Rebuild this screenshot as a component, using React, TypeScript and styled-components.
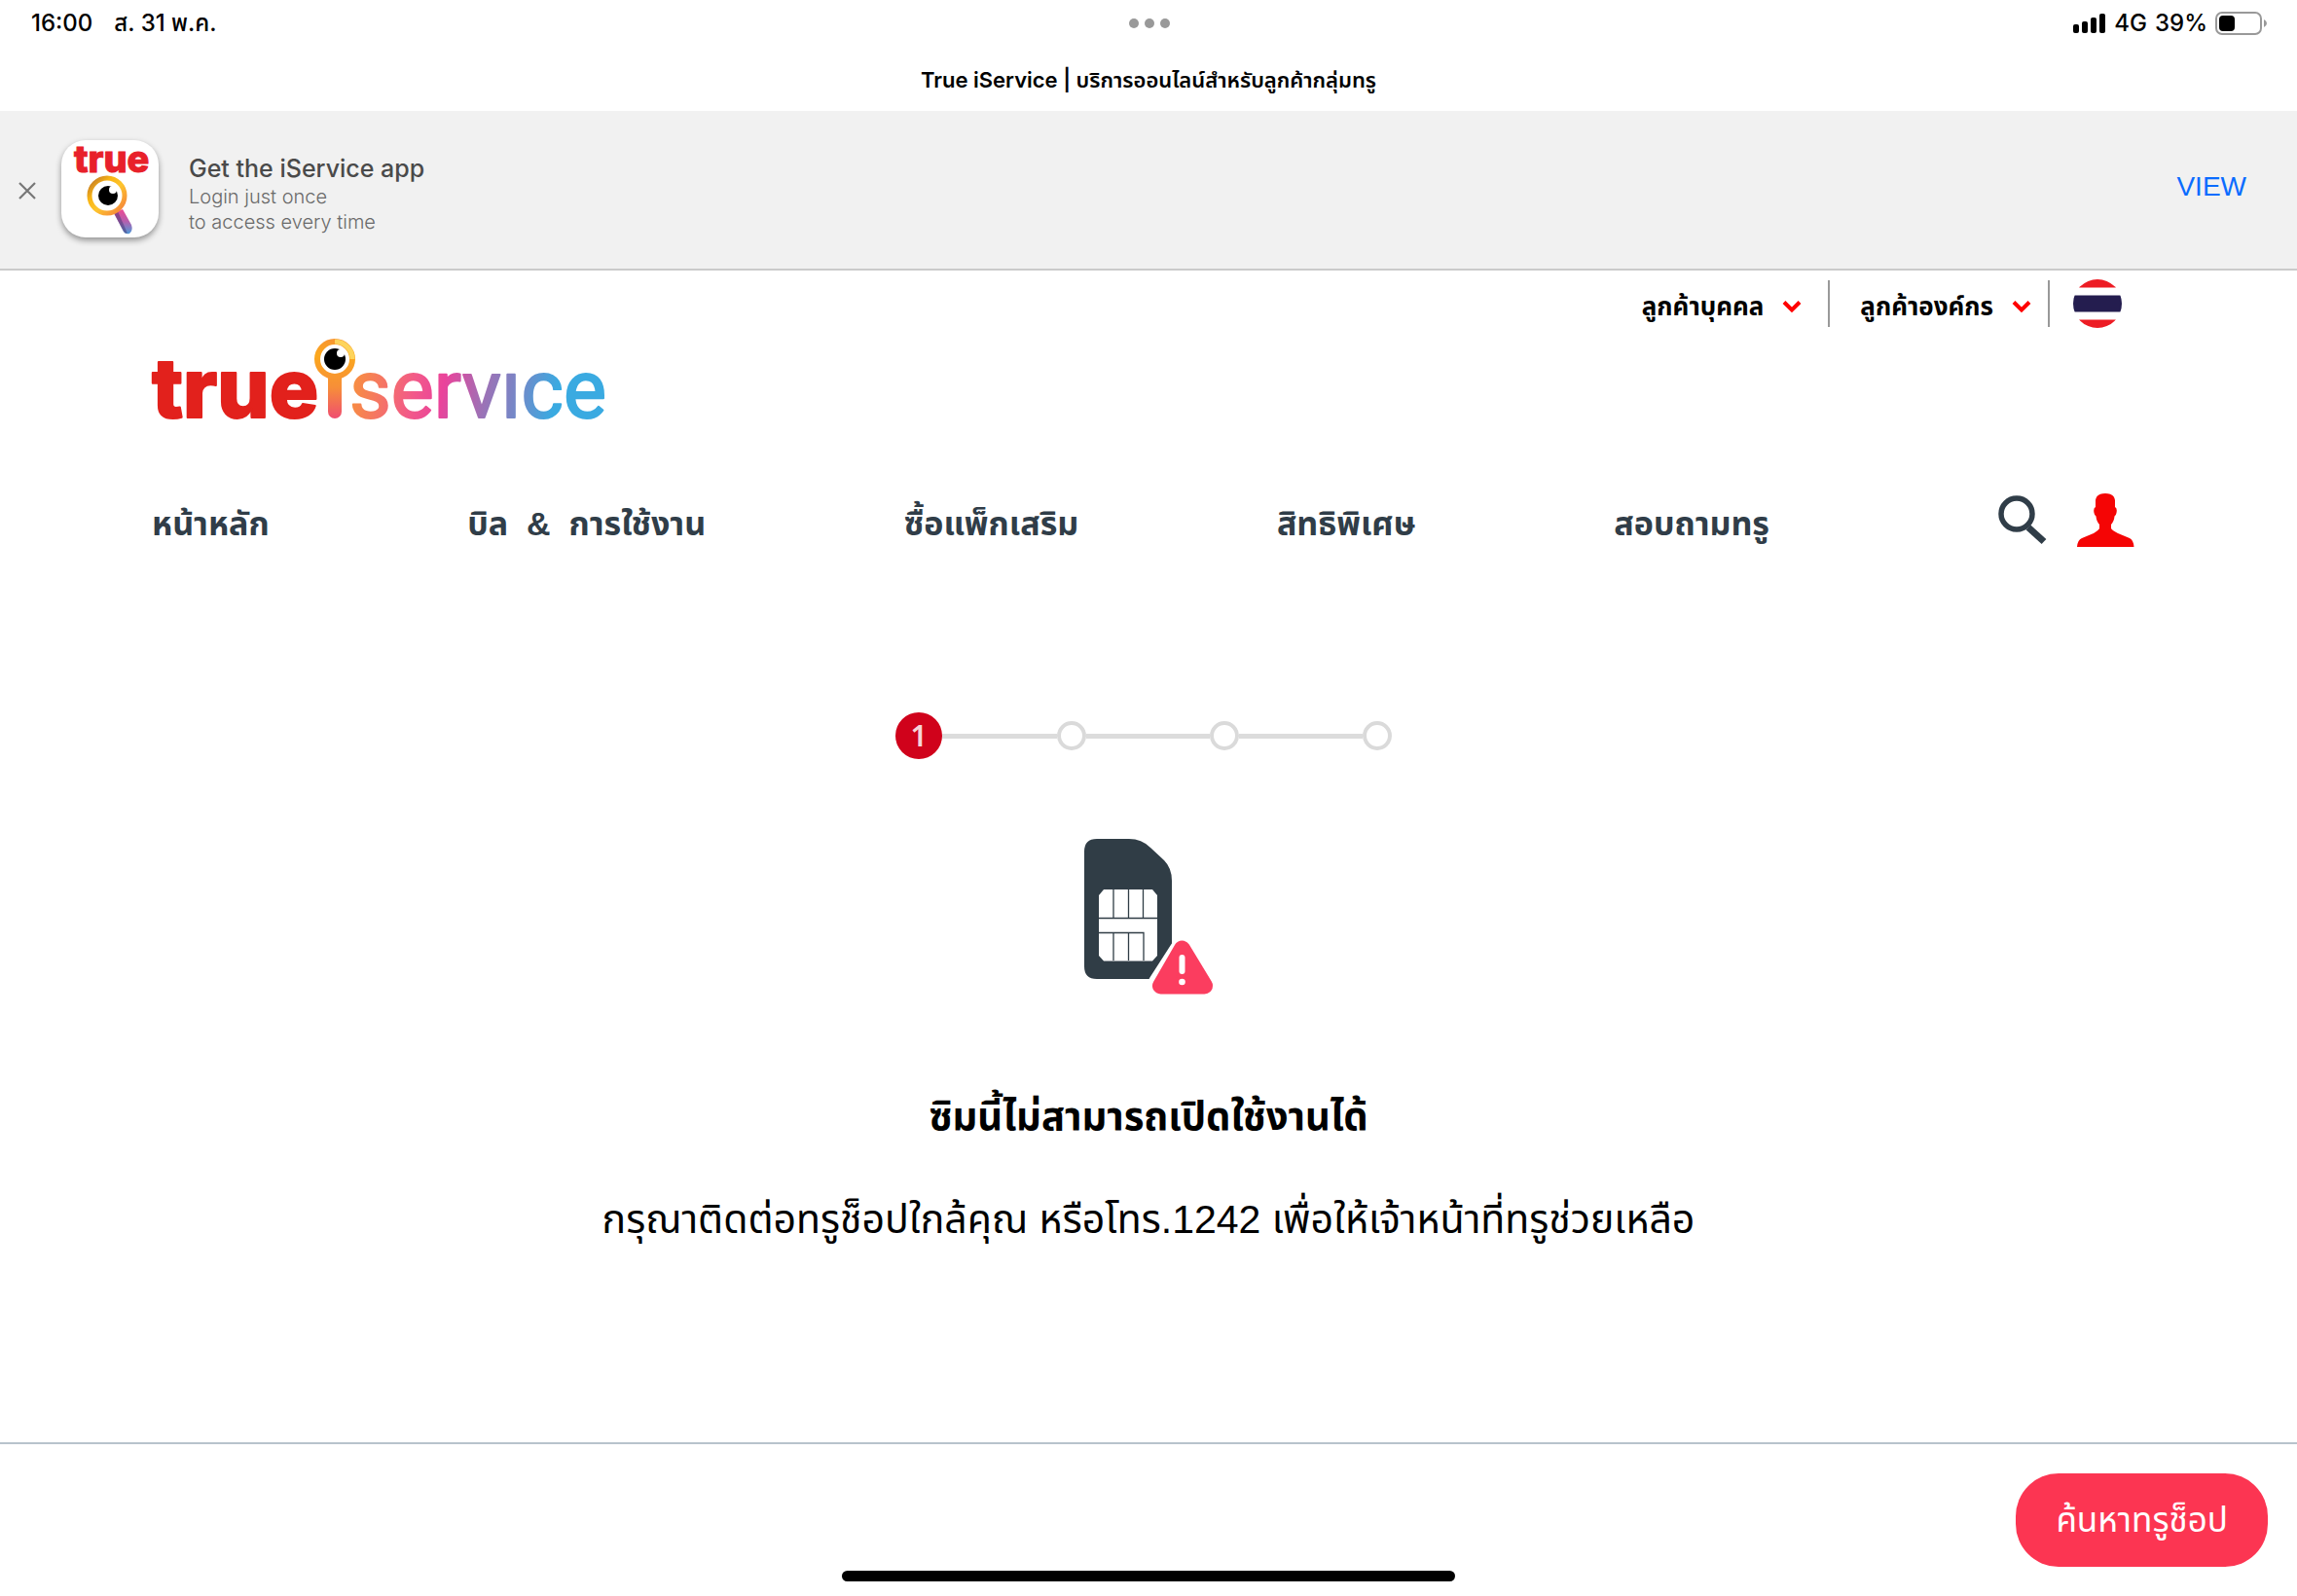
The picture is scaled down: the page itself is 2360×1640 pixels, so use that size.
import React from "react";
import styled, { createGlobalStyle } from "styled-components";

const ui = `Inter, "Noto Sans Thai", "Noto Sans", sans-serif`;
const helv = `"Liberation Sans", Arial, sans-serif`;
const thai = `"Liberation Sans", "Noto Sans Thai", sans-serif`;

const GlobalStyle = createGlobalStyle`
  *, *::before, *::after { box-sizing: border-box; }
  html, body, #root { height: 100%; }
  body { margin: 0; background: #fff; color: #000; font-family: ${thai}; }
  h1, h2, p, ol { margin: 0; padding: 0; }
  button { border: 0; padding: 0; background: none; color: inherit; font-family: inherit; cursor: pointer; }
  a { color: inherit; text-decoration: none; }
  svg { display: block; overflow: visible; }
`;

const Screen = styled.div`
  min-height: 100vh;
  display: flex;
  flex-direction: column;
`;

const StatusBar = styled.div`
  display: grid;
  grid-template-columns: 1fr auto 1fr;
  align-items: center;
  height: 48px;
  padding: 0 30px 0 32px;
  font: 500 24px/32px ${ui};
`;

const StatusLeft = styled.div`
  display: flex;
  gap: 22px;
`;

const StatusRight = styled.div`
  display: flex;
  align-items: center;
  justify-content: flex-end;
  gap: 8px;
`;

const Dots = styled.div`
  display: flex;
  gap: 6px;
`;

const Dot = styled.span`
  width: 10px;
  height: 10px;
  border-radius: 50%;
  background: #999;
`;

const TabTitle = styled.div`
  height: 66px;
  padding-top: 18px;
  text-align: center;
  font: 600 22px/32px ${ui};
`;

const AppBanner = styled.aside`
  display: flex;
  align-items: center;
  height: 164px;
  padding: 0 52px 0 20px;
  background: #f1f1f1;
  border-bottom: 2px solid #cbcbcb;
`;

const CloseButton = styled.button`
  padding-top: 2px;
`;

const AppIcon = styled.div`
  width: 100px;
  height: 100px;
  margin: 0 31px 2px 27px;
  border-radius: 25px;
  background: #fff;
  box-shadow: 0 3px 6px rgba(0, 0, 0, 0.4);
`;

const BannerText = styled.div`
  flex: 1;
  padding-top: 8px;
  font: 300 20px/26px ${ui};
  color: #6a6a6a;
`;

const BannerTitle = styled.div`
  font: 500 25px/32px ${ui};
  color: #4a4a4a;
`;

const ViewLink = styled.a`
  && { color: #0a6cff; }
  padding-bottom: 6px;
  font: 400 28px/32px ${helv};
`;

const Header = styled.header`
  padding: 8px 156px 0;
`;

const TopLinks = styled.div`
  display: flex;
  justify-content: flex-end;
  align-items: center;
  height: 52px;
  padding-right: 24px;
`;

const TopItem = styled.button`
  display: flex;
  align-items: center;
  gap: 19px;
  height: 48px;
  padding: 6px 17px 0 31px;
  border-right: 2px solid #999;
  font-size: 26px;
  line-height: 40px;
  font-weight: 700;
  &:first-child { padding-right: 27px; }
`;

const FlagButton = styled.button`
  margin-left: 24px;
`;

const Brand = styled.a`
  display: block;
  width: 468px;
  margin-top: 10px;
`;

const MainNav = styled.nav`
  display: flex;
  align-items: center;
  margin-top: 64px;
  height: 72px;
`;

const NavItems = styled.div`
  flex: 1;
  display: flex;
  justify-content: space-between;
  color: #303d48;
  font-size: 34px;
  line-height: 56px;
  font-weight: 700;
`;

const NavIcons = styled.div`
  display: flex;
  align-items: center;
  gap: 31px;
  padding: 0 11px 8px 235px;
`;

const Main = styled.main`
  flex: 1;
  display: flex;
  flex-direction: column;
  align-items: center;
  padding-top: 158px;
`;

const Steps = styled.ol`
  display: flex;
  align-items: center;
  list-style: none;
  margin-right: 10px;
`;

const Step = styled.li<{ $active?: boolean }>`
  display: grid;
  place-items: center;
  width: ${(p) => (p.$active ? 48 : 30)}px;
  height: ${(p) => (p.$active ? 48 : 30)}px;
  border-radius: 50%;
  border: ${(p) => (p.$active ? "0" : "4px solid #dadada")};
  background: ${(p) => (p.$active ? "#d0021b" : "#fff")};
  color: #f6d5d9;
  font: 600 30px/32px "Noto Sans", sans-serif;
`;

const StepLine = styled.li`
  width: 127px;
  height: 5px;
  background: #dcdcdc;
  &:nth-child(2) { width: 118px; }
`;

const SimArt = styled.div`
  margin-top: 82px;
`;

const Heading = styled.h1`
  margin-top: 93px;
  font-size: 40px;
  line-height: 64px;
  font-weight: 700;
`;

const Message = styled.p`
  margin-top: 42px;
  font-size: 41px;
  line-height: 64px;
`;

const Footer = styled.footer`
  position: relative;
  height: 158px;
  display: flex;
  justify-content: flex-end;
  align-items: flex-start;
  padding: 30px 30px 0;
  border-top: 2px solid #b8c3cc;
`;

const ShopButton = styled.button`
  height: 96px;
  padding: 0 41px;
  border-radius: 44px;
  background: #fc3552;
  color: #fff;
  font-size: 35px;
  line-height: 56px;
`;

const HomeIndicator = styled.div`
  position: absolute;
  left: 50%;
  bottom: 15px;
  width: 630px;
  height: 11px;
  margin-left: -315px;
  border-radius: 6px;
  background: #000;
`;

const Chevron = () => (
  <svg width="20" height="14" viewBox="0 0 20 14" fill="none" stroke="#f00" strokeWidth="4">
    <path d="M2 2.500 L10 10.500 L18 2.500" />
  </svg>
);

const Flag = () => (
  <svg width="50" height="50" viewBox="0 0 50 50" aria-hidden="true">
    <clipPath id="flag"><circle cx="25" cy="25" r="25" /></clipPath>
    <g clipPath="url(#flag)">
      <rect width="50" height="50" fill="#fff" />
      <rect width="50" height="8.500" fill="#ed1c24" />
      <rect y="16.500" width="50" height="17" fill="#241d4f" />
      <rect y="41.500" width="50" height="9" fill="#ed1c24" />
    </g>
  </svg>
);

const Signal = () => (
  <svg width="34" height="20" viewBox="0 0 34 20">
    <rect x="0" y="11" width="6" height="9" rx="2" />
    <rect x="9" y="8" width="6" height="12" rx="2" />
    <rect x="18" y="4" width="6" height="16" rx="2" />
    <rect x="27" y="0" width="6" height="20" rx="2" />
  </svg>
);

const Battery = () => (
  <svg width="54" height="24" viewBox="0 0 54 24">
    <rect x="1" y="1" width="46" height="22" rx="6" fill="none" stroke="#999" strokeWidth="2" />
    <rect x="4" y="4" width="16" height="16" rx="4" />
    <path d="M50 8 Q53 9.500 53 12 Q53 14.500 50 16 Z" fill="#999" />
  </svg>
);

const AppIconArt = () => (
  <svg width="100" height="100" viewBox="0 0 100 100" aria-hidden="true">
    <defs>
      <linearGradient id="ring" x1="0" y1="0" x2="1" y2="1">
        <stop offset="0" stopColor="#b8702c" />
        <stop offset=".3" stopColor="#f9b514" />
        <stop offset=".55" stopColor="#fdc52e" />
        <stop offset="1" stopColor="#f47b3c" />
      </linearGradient>
      <linearGradient id="handle" x1="0" y1="0" x2="0" y2="1">
        <stop offset="0" stopColor="#ee4a93" />
        <stop offset=".5" stopColor="#b45fae" />
        <stop offset="1" stopColor="#4d9ad8" />
      </linearGradient>
    </defs>
    <text x="13" y="33" fontFamily="Inter" fontWeight="800" fontSize="38" fill="#e8202a" stroke="#e8202a">true</text>
    <path d="M54 75 L63 71 L72 87 Q74 93 70 96 Q66 97 64 94 Z" fill="url(#handle)" />
    <path d="M54 75 L58 73 L68 96 Q65 96 64 94 Z" fill="#4a3a78" opacity=".55" />
    <circle cx="47" cy="57" r="18" fill="#fff" stroke="url(#ring)" strokeWidth="5" />
    <circle cx="48" cy="57" r="10" />
    <circle cx="53" cy="51" r="4" fill="#fff" />
  </svg>
);

const Logo = () => (
  <svg width="468" height="90" viewBox="0 0 468 90" role="img" aria-label="true iService">
    <defs>
      <linearGradient id="stem" gradientUnits="userSpaceOnUse" x1="0" y1="0" x2="0" y2="83">
        <stop offset="0" stopColor="#f79433" />
        <stop offset=".2" stopColor="#fba81c" />
        <stop offset=".6" stopColor="#f78f38" />
        <stop offset="1" stopColor="#ef4b72" />
      </linearGradient>
      <linearGradient id="word" gradientUnits="userSpaceOnUse" x1="205" y1="34" x2="440" y2="80">
        <stop offset="0" stopColor="#f8923c" />
        <stop offset=".28" stopColor="#f2598a" />
        <stop offset=".4" stopColor="#ea439b" />
        <stop offset=".58" stopColor="#9c72b6" />
        <stop offset=".72" stopColor="#7488c8" />
        <stop offset=".88" stopColor="#3aaae1" />
      </linearGradient>
    </defs>
    <text x="0" y="81" fontFamily="Inter" fontWeight="800" fontSize="84" fill="#e2211c" stroke="#e2211c" strokeWidth="2" strokeLinejoin="round">true</text>
    <text x="203" y="81" fontFamily="Roboto" fontSize="83" fill="url(#word)" stroke="url(#word)" strokeWidth="2" strokeLinejoin="round">servıce</text>
    <path d="M188 36 V75" stroke="url(#stem)" strokeWidth="14" strokeLinecap="round" />
    <circle cx="188" cy="21" r="18" fill="#fff" stroke="url(#stem)" strokeWidth="6" />
    <path d="M188 3 A18 18 0 0 1 206 21" fill="none" stroke="#fdd45c" strokeWidth="5" />
    <circle cx="188" cy="21" r="11" />
    <circle cx="194" cy="15" r="4" fill="#fff" />
  </svg>
);

const SearchIcon = () => (
  <svg width="50" height="50" viewBox="0 0 50 50" fill="none" stroke="#303d48">
    <ellipse cx="19" cy="19" rx="16" ry="16" strokeWidth="5.500" />
    <path d="M31 33 L47 47.500" strokeWidth="7" />
  </svg>
);

const PersonIcon = () => (
  <svg width="59" height="55" viewBox="0 0 59 55" fill="#f50505">
    <path d="M19 14 V7 Q20 0 29 0 Q38 0 39 7 V14 Q41.500 15 40.500 20 Q40 23 38.500 23.500 Q38 29 35 32 V36 Q36 38 42 41 L54 46 Q58 48 58.500 55 H0 Q.5 48 5 46 L17 41 Q22 38 23 36 V32 Q20 29 19.500 23.500 Q18 23 17.500 20 Q16.500 15 19 14 Z" />
  </svg>
);

const SimIcon = () => (
  <svg width="132" height="160" viewBox="0 0 132 160" aria-hidden="true">
    <path d="M13 0 H46 Q59 0 68 9 L82 22 Q90 30 90 43 V132 Q90 144 78 144 H13 Q0 144 0 131 V13 Q0 0 13 0 Z" fill="#303d46" />
    <path d="M20 52 H70 L75 58 V120 L70 125.500 H20 L15 120 V58 Z" fill="#fff" />
    <path d="M30 52 V81 M45.500 52 V81 M60.500 52 V81 M15 81.500 H75 M15 96.500 H61 V125 M45.500 97 V125 M30 97 V125" fill="none" stroke="#303d46" strokeWidth="1.300" />
    <path d="M100.500 115 L78 150 H124 Z" fill="#fff" stroke="#fff" strokeWidth="26" strokeLinejoin="round" />
    <path d="M100.500 113 L78.500 151 H123.500 Z" fill="#fb3d5f" stroke="#fb3d5f" strokeWidth="17" strokeLinejoin="round" />
    <path d="M100.500 122 V136" stroke="#fff" strokeWidth="6" strokeLinecap="round" />
    <circle cx="100.500" cy="147" r="3.300" fill="#fff" />
  </svg>
);

const NAV = ["หน้าหลัก", "บิล \u00a0&\u00a0 การใช้งาน", "ซื้อแพ็กเสริม", "สิทธิพิเศษ", "สอบถามทรู"];

export default function App() {
  return (
    <Screen>
      <GlobalStyle />
      <StatusBar>
        <StatusLeft><span>16:00</span><span>ส. 31 พ.ค.</span></StatusLeft>
        <Dots><Dot /><Dot /><Dot /></Dots>
        <StatusRight><Signal /><span>4G</span><span>39%</span><Battery /></StatusRight>
      </StatusBar>
      <TabTitle>True iService | บริการออนไลน์สำหรับลูกค้ากลุ่มทรู</TabTitle>
      <AppBanner>
        <CloseButton aria-label="Close">
          <svg width="16" height="16" viewBox="0 0 16 16" stroke="#777" strokeWidth="2.200"><path d="M0 0 L16 16 M16 0 L0 16" /></svg>
        </CloseButton>
        <AppIcon><AppIconArt /></AppIcon>
        <BannerText>
          <BannerTitle>Get the iService app</BannerTitle>
          <div>Login just once</div>
          <div>to access every time</div>
        </BannerText>
        <ViewLink href="#view">VIEW</ViewLink>
      </AppBanner>
      <Header>
        <TopLinks>
          <TopItem>ลูกค้าบุคคล<Chevron /></TopItem>
          <TopItem>ลูกค้าองค์กร<Chevron /></TopItem>
          <FlagButton aria-label="ไทย"><Flag /></FlagButton>
        </TopLinks>
        <Brand href="#home"><Logo /></Brand>
        <MainNav>
          <NavItems>{NAV.map((n) => <a key={n} href="#nav">{n}</a>)}</NavItems>
          <NavIcons>
            <button aria-label="Search"><SearchIcon /></button>
            <button aria-label="Profile"><PersonIcon /></button>
          </NavIcons>
        </MainNav>
      </Header>
      <Main>
        <Steps>
          <Step $active>1</Step>
          <StepLine aria-hidden="true" />
          <Step />
          <StepLine aria-hidden="true" />
          <Step />
          <StepLine aria-hidden="true" />
          <Step />
        </Steps>
        <SimArt><SimIcon /></SimArt>
        <Heading>ซิมนี้ไม่สามารถเปิดใช้งานได้</Heading>
        <Message>กรุณาติดต่อทรูช็อปใกล้คุณ หรือโทร.1242 เพื่อให้เจ้าหน้าที่ทรูช่วยเหลือ</Message>
      </Main>
      <Footer>
        <ShopButton>ค้นหาทรูช็อป</ShopButton>
        <HomeIndicator />
      </Footer>
    </Screen>
  );
}
